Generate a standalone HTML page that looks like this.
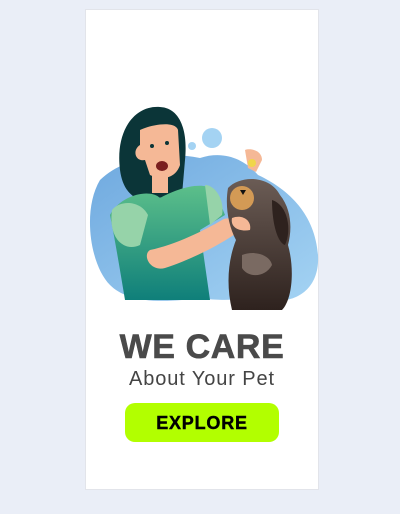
<!DOCTYPE html>
<html><head><style>
html,body{margin:0;padding:0;width:400px;height:514px;background:#eaeef7;overflow:hidden;font-family:"Liberation Sans",sans-serif}
.card{position:absolute;left:85px;top:9px;width:234px;height:481px;background:#fff;border:1px solid #e2e4ea;box-sizing:border-box}
svg{position:absolute;left:0;top:0}
.h{position:absolute;left:85px;width:234px;text-align:center}
</style></head><body>
<div class="card"></div>
<svg width="400" height="514" viewBox="0 0 400 514">
<defs>
<linearGradient id="bl" x1="0" y1="0" x2="1" y2="1"><stop offset="0" stop-color="#6fa9df"/><stop offset="1" stop-color="#a4d3f3"/></linearGradient>
<linearGradient id="gr" x1="0" y1="0" x2="0" y2="1"><stop offset="0" stop-color="#5cbf8a"/><stop offset="1" stop-color="#0f7f7a"/></linearGradient>
<linearGradient id="dg" x1="0" y1="0" x2="0" y2="1"><stop offset="0" stop-color="#6b5c55"/><stop offset="1" stop-color="#2e221e"/></linearGradient>
</defs>
<path d="M100 180 C120 160 160 150 200 158 C225 150 245 160 258 175 C290 190 315 215 318 255 C320 290 295 305 265 300 C240 298 225 302 200 298 C170 302 130 305 110 285 C90 265 82 210 100 180Z" fill="url(#bl)"/>
<circle cx="212" cy="138" r="10" fill="#a4d3f3"/>
<circle cx="192" cy="146" r="4" fill="#a4d3f3"/>
<path d="M120 170 C115 130 135 105 160 107 C180 108 188 130 185 160 L182 195 L140 200 C128 195 122 185 120 170Z" fill="#0b3538"/>
<path d="M140 130 C150 125 175 120 178 130 L180 165 C175 180 160 180 150 175 L145 160 C135 162 132 150 140 145Z" fill="#f5b896"/>
<path d="M152 175 L168 175 L168 193 L152 193Z" fill="#f5b896"/>
<ellipse cx="162" cy="166" rx="6" ry="5" fill="#7a1f1f"/>
<circle cx="152" cy="146" r="2" fill="#0b3538"/><circle cx="167" cy="143" r="2" fill="#0b3538"/>
<path d="M110 215 C120 195 150 188 160 198 C175 190 200 180 215 190 L225 215 L200 230 L210 300 L125 300 C120 270 115 240 110 215Z" fill="url(#gr)"/>
<path d="M112 210 C120 200 140 200 148 215 L140 245 C125 252 108 240 112 210Z" fill="#96d3a9"/>
<path d="M205 185 C215 185 225 200 222 215 L210 225 Z" fill="#96d3a9"/>
<path d="M150 250 C175 245 205 230 222 220 C230 215 240 222 238 232 C220 245 190 260 165 268 C150 272 142 255 150 250Z" fill="#f5b896"/>
<path d="M228 188 C240 175 270 175 280 195 C292 210 292 230 288 245 C295 270 292 300 282 310 L232 310 C226 285 228 260 236 240 C228 225 225 205 228 188Z" fill="url(#dg)"/>
<path d="M272 200 C288 205 292 230 285 245 C278 243 272 225 272 200Z" fill="#2e221e"/>
<circle cx="242" cy="198" r="12" fill="#d39a55"/>
<path d="M240 190 L246 190 L243 195Z" fill="#111"/>
<path d="M245 150 C250 148 262 150 262 160 L256 172 L248 168Z" fill="#f5b896"/>
<circle cx="252" cy="163" r="4" fill="#f0d64a"/>
<path d="M232 218 C242 214 252 220 250 230 C240 232 230 228 232 218Z" fill="#f5b896"/>
<path d="M242 255 C255 250 270 255 272 265 C265 278 248 278 242 268Z" fill="#7a6a62"/>
</svg>
<div class="h" style="top:327px;font-size:34px;font-weight:900;color:#4a4a4a;letter-spacing:0.6px;line-height:40px;-webkit-text-stroke:0.6px #4a4a4a">WE CARE</div>
<div class="h" style="top:367px;font-size:20px;color:#444;line-height:24px;letter-spacing:0.9px">About Your Pet</div>
<div style="position:absolute;left:125px;top:403px;width:154px;height:39px;border-radius:10px;background:#b2ff00;text-align:center;line-height:40px;font-size:18px;font-weight:bold;color:#000;letter-spacing:0.8px;-webkit-text-stroke:0.4px #000">EXPLORE</div>
</body></html>
